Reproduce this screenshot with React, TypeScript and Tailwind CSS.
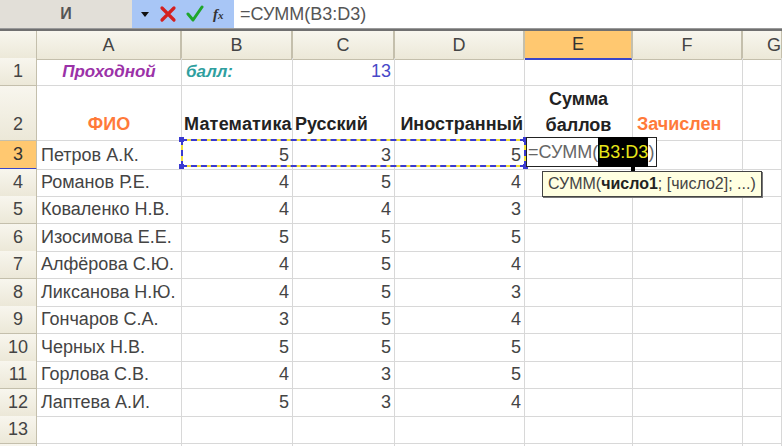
import React from "react";

const cols = "grid grid-cols-[37px_145px_111px_102px_130px_108px_110px_39px]";
const cell = "border-r border-b border-[#d8d8d8] overflow-visible whitespace-nowrap";
const rh = "border-r border-b border-[#c4bfac] bg-gradient-to-b from-[#f8f6ee] to-[#ece8d8] text-[#444] flex items-center justify-center";

type R = [string, number, number, number];
const data: R[] = [
  ["Петров А.К.", 5, 3, 5],
  ["Романов Р.Е.", 4, 5, 4],
  ["Коваленко Н.В.", 4, 4, 3],
  ["Изосимова Е.Е.", 5, 5, 5],
  ["Алфёрова С.Ю.", 4, 5, 4],
  ["Ликсанова Н.Ю.", 4, 5, 3],
  ["Гончаров С.А.", 3, 5, 4],
  ["Черных Н.В.", 5, 5, 5],
  ["Горлова С.В.", 4, 3, 5],
  ["Лаптева А.И.", 5, 3, 4],
];

function Num({ v }: { v: number }) {
  return <div className={`${cell} flex items-center justify-end pr-[3px]`}>{v}</div>;
}

export default function App() {
  return (
    <div className="relative w-[782px] h-[446px] overflow-hidden bg-white text-[18px] text-[#444] font-['Liberation_Sans',Arial,sans-serif]">
      {/* formula bar */}
      <div className="flex h-[28px]">
        <div className="w-[132px] bg-[#e2dfd8] flex items-center justify-center text-[#555] text-[16px] font-bold">И</div>
        <div className="w-[102px] bg-[#a8c6f6] flex items-center pl-[8px] gap-[9px]">
          <svg width="10" height="8" viewBox="0 0 10 8"><path d="M1 2h8L5 7z" fill="#111" /></svg>
          <svg width="18" height="18" viewBox="0 0 18 18"><path d="M3 3l12 12M15 3L3 15" stroke="#d42020" strokeWidth="3.2" strokeLinecap="round" /></svg>
          <svg width="18" height="18" viewBox="0 0 18 18"><path d="M2 9l5 6L16 2" stroke="#1fa62a" strokeWidth="3" fill="none" strokeLinecap="round" strokeLinejoin="round" /></svg>
          <span className="italic font-bold text-[15px] text-[#333] font-['Liberation_Serif',serif] leading-none">f<span className="text-[11px]">x</span></span>
        </div>
        <div className="flex-1 flex items-center pl-[6px] text-[#555]">=СУММ(B3:D3)</div>
      </div>
      <div className="h-[1px] bg-[#9a9a9a]" />
      <div className="h-[2px] bg-[#707070]" />
      {/* column header */}
      <div className={`${cols} h-[27px]`}>
        <div className={rh}></div>
        {["A", "B", "C", "D"].map((c) => (
          <div key={c} className={`${rh} border-r-2`}>{c}</div>
        ))}
        <div className="border-r-2 border-r-[#c4bfac] border-b-2 border-b-[#3a46c8] bg-[#ffc870] text-[#333] flex items-center justify-center">E</div>
        <div className={`${rh} border-r-2`}>F</div>
        <div className={`${rh} justify-end`}>G</div>
      </div>
      {/* row 1 */}
      <div className={`${cols} h-[28px]`}>
        <div className={rh}>1</div>
        <div className={`${cell} flex items-center justify-center italic font-bold text-[#9b32a8] text-[17px]`}>Проходной</div>
        <div className={`${cell} flex items-center pl-[4px] italic font-bold text-[#2f9f9f] text-[17px]`}>балл:</div>
        <div className={`${cell} flex items-center justify-end pr-[3px] text-[#4848c8]`}>13</div>
        <div className={cell}></div>
        <div className={cell}></div>
        <div className={cell}></div>
        <div className={cell}></div>
      </div>
      {/* row 2 */}
      <div className={`${cols} h-[55px]`}>
        <div className={`${rh} items-end pb-[2px]`}>2</div>
        <div className={`${cell} flex items-end justify-center pb-[2px] font-bold text-[#ff7a3a]`}>ФИО</div>
        <div className={`${cell} flex items-end pl-[2px] pb-[2px] font-bold text-[#222] tracking-[0.2px]`}>Математика</div>
        <div className={`${cell} flex items-end pl-[2px] pb-[2px] font-bold text-[#222]`}>Русский</div>
        <div className={`${cell} flex items-end justify-end pr-[1px] pb-[2px] font-bold text-[#222]`}>Иностранный</div>
        <div className={`${cell} flex flex-col items-center justify-end pb-[2px] font-bold text-[#222] leading-[26px]`}>
          <span>Сумма</span>
          <span>баллов</span>
        </div>
        <div className={`${cell} flex items-end pl-[4px] pb-[2px] font-bold text-[#ff7a3a]`}>Зачислен</div>
        <div className={cell}></div>
      </div>
      {/* data rows */}
      {data.map((r, i) => (
        <div key={i} className={`${cols} h-[27.5px]`}>
          <div className={i === 0 ? "border-r border-b-2 border-b-[#3a46c8] border-r-[#c4bfac] bg-[#ffc870] text-[#333] flex items-center justify-center" : rh}>{i + 3}</div>
          <div className={`${cell} flex items-center pl-[4px]`}>{r[0]}</div>
          <Num v={r[1]} />
          <Num v={r[2]} />
          <Num v={r[3]} />
          <div className={cell}></div>
          <div className={cell}></div>
          <div className={cell}></div>
        </div>
      ))}
      <div className={`${cols} h-[27.5px]`}>
        <div className={rh}>13</div>
        <div className={cell}></div>
        <div className={cell}></div>
        <div className={cell}></div>
        <div className={cell}></div>
        <div className={cell}></div>
        <div className={cell}></div>
        <div className={cell}></div>
      </div>
      <div className={`${cols} h-[27.5px]`}>
        <div className={rh}></div>
        <div className={cell}></div>
        <div className={cell}></div>
        <div className={cell}></div>
        <div className={cell}></div>
        <div className={cell}></div>
        <div className={cell}></div>
        <div className={cell}></div>
      </div>

      {/* marching ants around B3:D3 */}
      <div className="absolute left-[181px] top-[139px] w-[345px] h-[28px] border-2 border-[#f2e23a]" />
      <div className="absolute left-[181px] top-[139px] w-[345px] h-[28px] border-2 border-dashed border-[#3a3ad0]" />
      <div className="absolute left-[179px] top-[137px] w-[5px] h-[5px] bg-[#3a3ad0]" />
      <div className="absolute left-[179px] top-[164px] w-[5px] h-[5px] bg-[#3a3ad0]" />
      <div className="absolute left-[523px] top-[137px] w-[5px] h-[5px] bg-[#3a3ad0]" />
      <div className="absolute left-[523px] top-[164px] w-[5px] h-[5px] bg-[#3a3ad0]" />

      {/* editing cell */}
      <div className="absolute left-[526px] top-[137px] h-[30px] flex items-center bg-white border border-[#222] pl-[1px] pr-[2px] text-[#666]">
        <span>=СУММ(</span>
        <span className="bg-black text-[#e6e61a] h-[30px] -my-[1px] flex items-center">B3:D3</span>
        <span>)</span>
      </div>
      <div className="absolute left-[631px] top-[167px] w-[4px] h-[4px] bg-black" />

      {/* tooltip */}
      <div className="absolute left-[542px] top-[171px] w-[220px] h-[26px] bg-[#ffffe1] border border-[#444] shadow-[1px_1px_0_#777] flex items-center pl-[5px] text-[16px] text-[#444] whitespace-nowrap">
        СУММ(<b className="text-[#222]">число1</b>; [число2]; ...)
      </div>
    </div>
  );
}
